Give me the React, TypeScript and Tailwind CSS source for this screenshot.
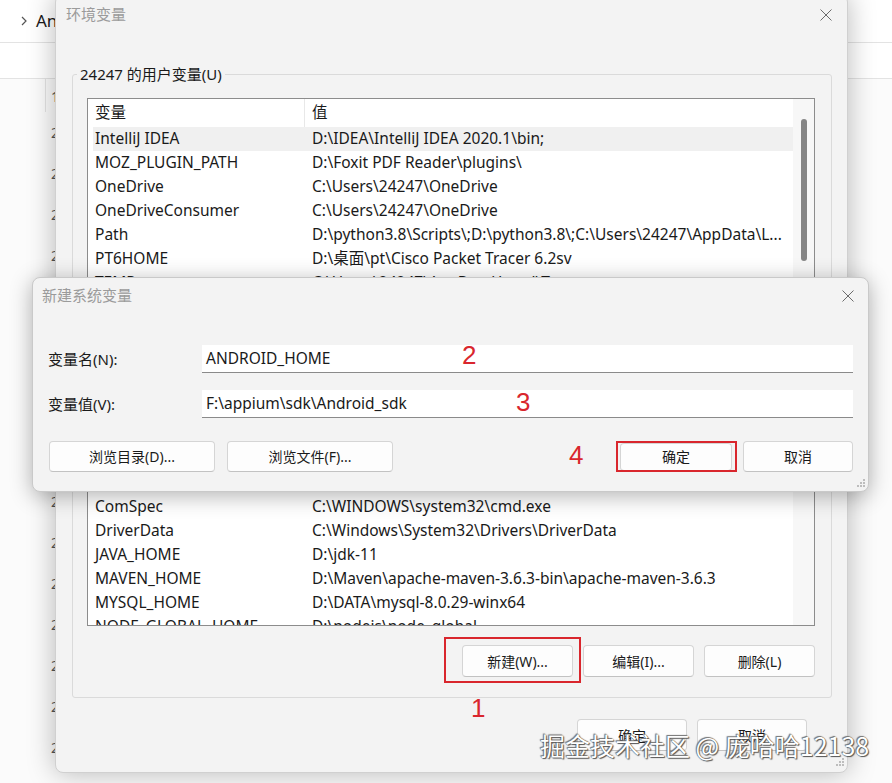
import React from 'react';

const userVars: [string, string][] = [
  ['IntelliJ IDEA', 'D:\\IDEA\\IntelliJ IDEA 2020.1\\bin;'],
  ['MOZ_PLUGIN_PATH', 'D:\\Foxit PDF Reader\\plugins\\'],
  ['OneDrive', 'C:\\Users\\24247\\OneDrive'],
  ['OneDriveConsumer', 'C:\\Users\\24247\\OneDrive'],
  ['Path', 'D:\\python3.8\\Scripts\\;D:\\python3.8\\;C:\\Users\\24247\\AppData\\L...'],
  ['PT6HOME', 'D:\\桌面\\pt\\Cisco Packet Tracer 6.2sv'],
  ['TEMP', 'C:\\Users\\24247\\AppData\\Local\\Temp'],
  ['TMP', 'C:\\Users\\24247\\AppData\\Local\\Temp'],
];

const sysVars: [string, string][] = [
  ['CATALINA_BASE', 'D:\\tomcat\\apache-tomcat-9.0.62'],
  ['CATALINA_HOME', 'D:\\tomcat\\apache-tomcat-9.0.62'],
  ['ComSpec', 'C:\\WINDOWS\\system32\\cmd.exe'],
  ['DriverData', 'C:\\Windows\\System32\\Drivers\\DriverData'],
  ['JAVA_HOME', 'D:\\jdk-11'],
  ['MAVEN_HOME', 'D:\\Maven\\apache-maven-3.6.3-bin\\apache-maven-3.6.3'],
  ['MYSQL_HOME', 'D:\\DATA\\mysql-8.0.29-winx64'],
  ['NODE_GLOBAL_HOME', 'D:\\nodejs\\node_global'],
];

const explorerDates = Array.from({ length: 16 }, (_, i) => `2022/6/${10 + i} 10:31`);

export default function App() {
  return (
    <div className="relative w-[892px] h-[783px] overflow-hidden bg-[#fbfbfb] text-[#1a1a1a] font-['Noto_Sans','Noto_Sans_CJK_SC',sans-serif]">
      {/* Explorer behind */}
      <div className="absolute inset-0 flex flex-col">
        <div className="h-[43px] flex items-center gap-[8px] pl-[20px] border-b border-[#e3e3e3] bg-white">
          <ChevronIcon />
          <span className="text-[17px]">Android</span>
        </div>
        <div className="h-[36px] border-b border-[#e3e3e3] bg-white" />
        <div className="flex">
          <div className="w-[46px] h-[33px] border-r border-[#e3e3e3]" />
          <div className="pl-[5px] pt-[7px] text-[14px] text-[#555]">1</div>
        </div>
        <div className="flex flex-col pl-[51px] text-[14px] text-[#555]">
          {explorerDates.map((d) => (
            <div key={d} className="h-[41px] leading-[41px]">{d}</div>
          ))}
        </div>
      </div>

      {/* 环境变量 */}
      <div className="absolute left-[55px] top-[-6px] w-[793px] h-[779px] flex flex-col rounded-[8px] border border-[#d0d0d0] bg-[#f3f3f3] shadow-[0_0_28px_rgba(0,0,0,0.28)]">
        <div className="h-[38px] flex items-center justify-between pl-[10px] pr-[15px] pt-[1px]">
          <span className="text-[15px] text-[#9b9b9b]">环境变量</span>
          <CloseIcon />
        </div>

        <fieldset className="mt-[31px] ml-[16px] mr-[15px] border border-[#dadada] rounded-[3px] pl-[14px] pr-[16px] pt-[14px] pb-[12px]">
          <legend className="ml-[-10px] px-[3px] text-[15px] leading-[20px]">24247 的用户变量(U)</legend>
          <VarList rows={userVars} selected={0} heightClass="h-[212px]" thumbClass="mt-[20px] h-[142px]" />
          <div className="mt-[10px] flex justify-end gap-[10px]">
            <WinButton className="w-[111px] h-[32px]">新建(N)...</WinButton>
            <WinButton className="w-[111px] h-[32px]">编辑(E)...</WinButton>
            <WinButton className="w-[111px] h-[32px]">删除(D)</WinButton>
          </div>
        </fieldset>

        <fieldset className="mt-[21px] ml-[16px] mr-[15px] border border-[#dadada] rounded-[3px] pl-[14px] pr-[16px] pt-[12px] pb-[20px]">
          <legend className="ml-[-10px] px-[3px] text-[15px] leading-[20px]">系统变量(S)</legend>
          <VarList rows={sysVars} selected={-1} heightClass="h-[208px]" thumbClass="mt-[20px] h-[40px]" />
          <div className="relative mt-[19px] flex justify-end gap-[10px]">
            <WinButton className="w-[111px] h-[32px]">新建(W)...</WinButton>
            <WinButton className="w-[111px] h-[32px]">编辑(I)...</WinButton>
            <WinButton className="w-[111px] h-[32px]">删除(L)</WinButton>
            <div className="absolute left-[357px] top-[-8px] w-[137px] h-[46px] border-2 border-[#d9262d]" />
          </div>
        </fieldset>

        <div className="mt-[21px] pr-[40px] flex justify-end gap-[10px]">
          <WinButton className="w-[110px] h-[32px]">确定</WinButton>
          <WinButton className="w-[110px] h-[32px]">取消</WinButton>
        </div>
        <div className="mt-auto flex justify-end pr-[3px] pb-[4px]">
          <GripIcon />
        </div>
      </div>

      {/* 新建系统变量 */}
      <div className="absolute left-[32px] top-[277px] w-[837px] h-[215px] flex flex-col rounded-[8px] border border-[#c9c9c9] bg-[#f3f3f3] shadow-[0_4px_22px_rgba(0,0,0,0.3)]">
        <div className="h-[34px] flex items-center justify-between pl-[9px] pr-[14px] pt-[1px]">
          <span className="text-[15px] text-[#9b9b9b]">新建系统变量</span>
          <CloseIcon />
        </div>
        <div className="mt-[33px] flex items-center pl-[15px] pr-[15px]">
          <span className="w-[154px] text-[15px]">变量名(N):</span>
          <div className="flex-1 h-[28px] flex items-center pl-[4px] bg-white border-b border-[#8a8a8a] text-[15.5px]">ANDROID_HOME</div>
        </div>
        <div className="mt-[17px] flex items-center pl-[15px] pr-[15px]">
          <span className="w-[154px] text-[15px]">变量值(V):</span>
          <div className="flex-1 h-[28px] flex items-center pl-[4px] bg-white border-b border-[#8a8a8a] text-[15.5px]">F:\appium\sdk\Android_sdk</div>
        </div>
        <div className="mt-[23px] flex items-center pl-[16px] pr-[15px]">
          <WinButton className="w-[166px] h-[31px]">浏览目录(D)...</WinButton>
          <WinButton className="ml-[12px] w-[166px] h-[31px]">浏览文件(F)...</WinButton>
          <div className="relative ml-auto">
            <WinButton className="w-[112px] h-[28px]">确定</WinButton>
            <div className="absolute left-[-4px] top-[-2px] w-[121px] h-[31px] border-2 border-[#d9262d]" />
          </div>
          <WinButton className="ml-[11px] w-[110px] h-[31px]">取消</WinButton>
        </div>
        <div className="mt-auto flex justify-end pr-[3px] pb-[2px]">
          <GripIcon />
        </div>
      </div>

      {/* annotations */}
      <span className="absolute left-[462px] top-[340px] text-[26px] leading-[30px] text-[#d9262d] font-['Liberation_Sans',sans-serif]">2</span>
      <span className="absolute left-[516px] top-[387px] text-[26px] leading-[30px] text-[#d9262d] font-['Liberation_Sans',sans-serif]">3</span>
      <span className="absolute left-[569px] top-[440px] text-[26px] leading-[30px] text-[#d9262d] font-['Liberation_Sans',sans-serif]">4</span>
      <span className="absolute left-[471px] top-[693px] text-[26px] leading-[30px] text-[#d9262d] font-['Liberation_Sans',sans-serif]">1</span>

      {/* watermark */}
      <span className="absolute left-[540px] top-[729px] text-[25px] leading-[32px] text-white [text-shadow:0_0_1px_#444,1px_1px_1px_#555,-1px_-1px_1px_#777] font-['Noto_Sans_CJK_SC',sans-serif]">
        掘金技术社区 @ 庞哈哈12138
      </span>
    </div>
  );
}

function VarList({
  rows,
  selected,
  heightClass,
  thumbClass,
}: {
  rows: [string, string][];
  selected: number;
  heightClass: string;
  thumbClass: string;
}) {
  return (
    <div className={`flex border border-[#8c8c8c] bg-white overflow-hidden ${heightClass}`}>
      <div className="flex-1 min-w-0 text-[15.5px]">
        <div className="flex h-[28px] items-center">
          <div className="w-[217px] h-full pl-[7px] flex items-center border-r border-[#e8e8e8]">变量</div>
          <div className="pl-[7px]">值</div>
        </div>
        {rows.map(([name, value], i) => (
          <div
            key={name}
            className={`ml-[5px] flex h-[24px] items-center whitespace-nowrap ${i === selected ? 'bg-[#f0f0f0]' : ''}`}
          >
            <div className="w-[212px] pl-[2px]">{name}</div>
            <div className="pl-[7px]">{value}</div>
          </div>
        ))}
      </div>
      <div className="w-[21px] bg-[#f7f7f7] flex justify-center">
        <div className={`w-[6px] rounded-full bg-[#858585] ${thumbClass}`} />
      </div>
    </div>
  );
}

function WinButton({ className = '', children }: { className?: string; children: React.ReactNode }) {
  return (
    <button
      className={`flex items-center justify-center rounded-[4px] border border-[#d5d5d5] border-b-[#c2c2c2] bg-[#fdfdfd] text-[14px] text-[#1a1a1a] ${className}`}
    >
      {children}
    </button>
  );
}

function CloseIcon() {
  return (
    <svg width="12" height="12" viewBox="0 0 12 12" fill="none" stroke="#6b6b6b" strokeWidth="1">
      <path d="M0.5 0.5 L11.5 11.5 M11.5 0.5 L0.5 11.5" />
    </svg>
  );
}

function ChevronIcon() {
  return (
    <svg width="8" height="10" viewBox="0 0 8 10" fill="none" stroke="#555" strokeWidth="1.2">
      <path d="M2 1 L6 5 L2 9" />
    </svg>
  );
}

function GripIcon() {
  return (
    <svg width="10" height="10" viewBox="0 0 10 10" fill="#bdbdbd">
      <rect x="8" y="0" width="2" height="2" />
      <rect x="5" y="3" width="2" height="2" />
      <rect x="8" y="3" width="2" height="2" />
      <rect x="2" y="6" width="2" height="2" />
      <rect x="5" y="6" width="2" height="2" />
      <rect x="8" y="6" width="2" height="2" />
    </svg>
  );
}
